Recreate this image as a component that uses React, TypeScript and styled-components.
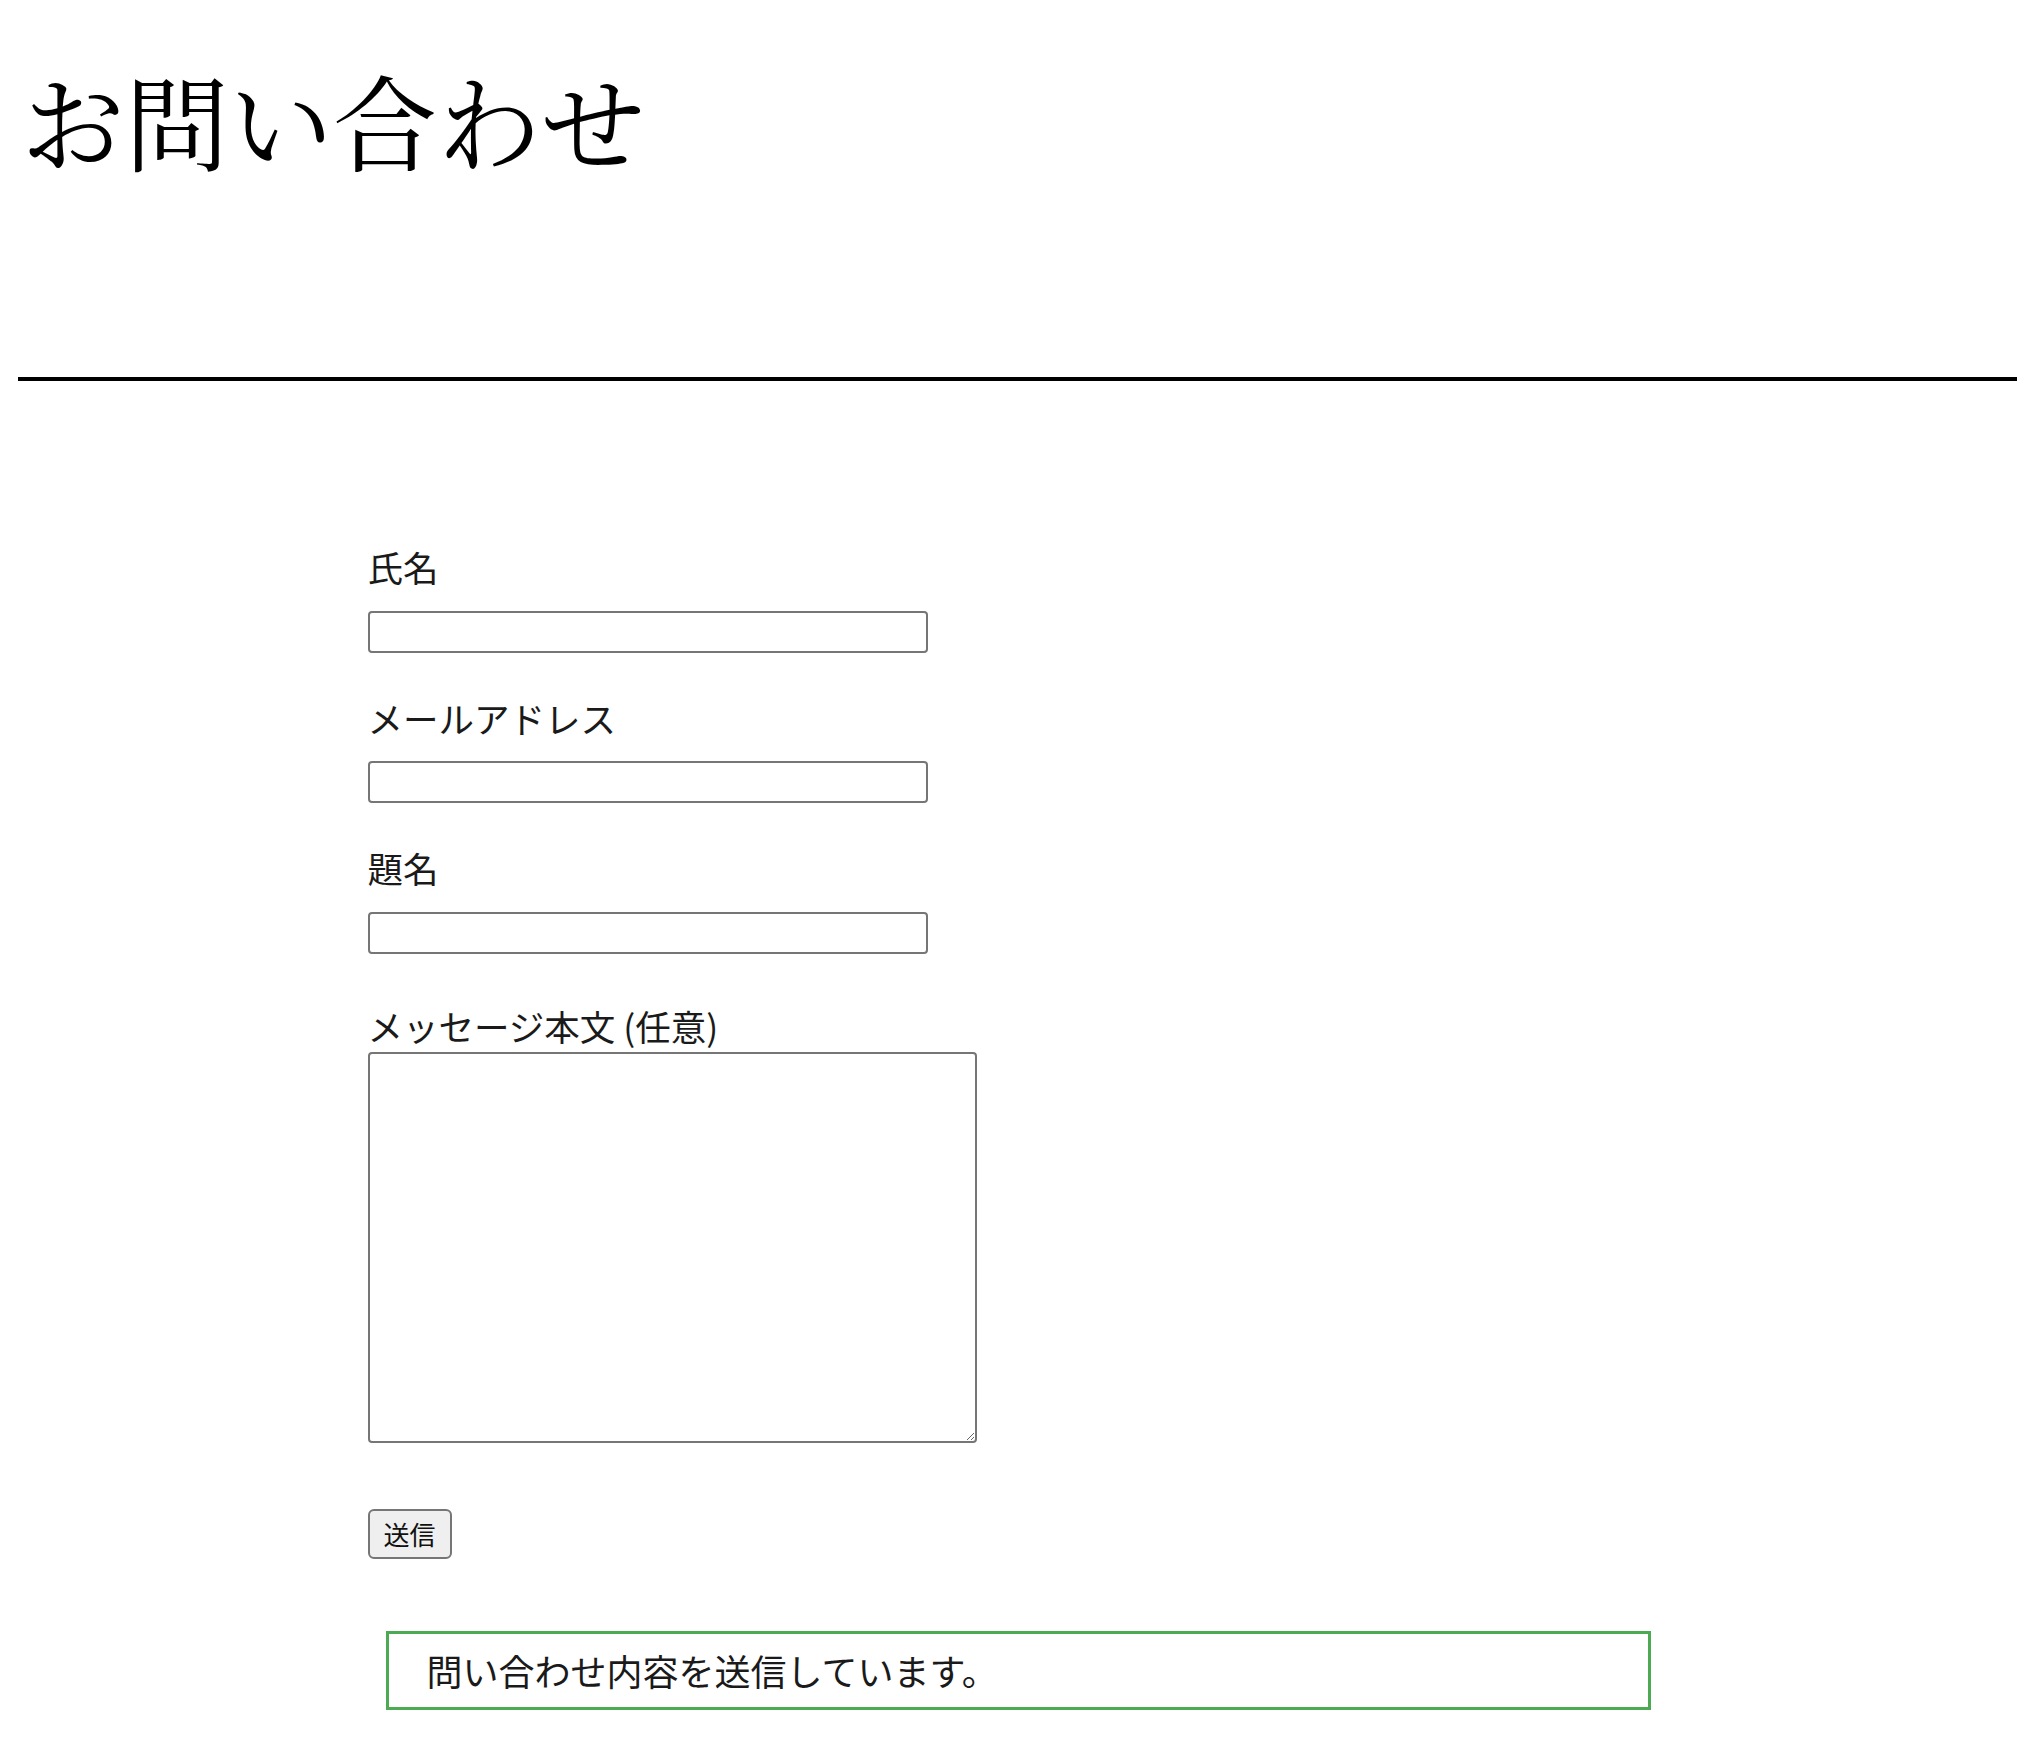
import styled, { createGlobalStyle } from 'styled-components';

const GlobalStyle = createGlobalStyle`
  body {
    margin: 0;
    background: #fff;
    color: #111;
    font-family: "Noto Sans CJK JP", "Noto Sans", sans-serif;
  }
`;

const Masthead = styled.header`
  padding: 67px 0 0 21px;
  height: 377px;
  box-sizing: border-box;
`;

const Title = styled.h1`
  margin: 0;
  font-family: "Noto Serif CJK JP", "Noto Sans CJK JP", serif;
  font-size: 104px;
  font-weight: 400;
  line-height: 1;
  color: #000;
`;

const Rule = styled.hr`
  margin: 0 18px;
  height: 4px;
  border: none;
  background: #000;
`;

const Content = styled.main`
  width: 1300px;
  margin: 0 auto;
  padding-top: 168px;
  padding-bottom: 30px;
`;

const Form = styled.form`
  display: flex;
  flex-direction: column;
  align-items: flex-start;
`;

const Field = styled.div<{ $gap?: number }>`
  display: flex;
  flex-direction: column;
  align-items: flex-start;
  margin-top: ${({ $gap }) => $gap ?? 0}px;
`;

const FieldLabel = styled.label<{ $space: number }>`
  display: block;
  font-size: 35.5px;
  line-height: 1;
  color: #1a1a1a;
  margin-bottom: ${({ $space }) => $space}px;
`;

const TextInput = styled.input`
  box-sizing: border-box;
  width: 560px;
  height: 42px;
  border: 2px solid #767676;
  border-radius: 4px;
  background: #fff;
  padding: 0 6px;
  font-size: 26px;
`;

const MessageArea = styled.textarea`
  box-sizing: border-box;
  width: 609px;
  height: 391px;
  border: 2px solid #767676;
  border-radius: 4px;
  background: #fff;
  font-size: 26px;
`;

const SubmitButton = styled.button`
  box-sizing: border-box;
  margin-top: 66px;
  width: 84px;
  height: 50px;
  padding: 0;
  border: 2px solid #767676;
  border-radius: 6px;
  background: #efefef;
  color: #111;
  font-family: "Noto Sans CJK JP", sans-serif;
  font-size: 26px;
  line-height: 1;
`;

const ResponseOutput = styled.div`
  align-self: stretch;
  box-sizing: border-box;
  margin: 72px 17px 0 18px;
  height: 79px;
  padding: 0 38px;
  border: 3px solid #4caa52;
  font-size: 36px;
  line-height: 73px;
  color: #1a1a1a;
`;

const fields = [
  { id: 'name', label: '氏名', gap: 0 },
  { id: 'email', label: 'メールアドレス', gap: 47 },
  { id: 'subject', label: '題名', gap: 47 },
];

export default function App() {
  return (
    <>
      <GlobalStyle />
      <Masthead>
        <Title>お問い合わせ</Title>
      </Masthead>
      <Rule />
      <Content>
        <Form onSubmit={(e) => e.preventDefault()}>
          {fields.map(({ id, label, gap }) => (
            <Field key={id} $gap={gap}>
              <FieldLabel htmlFor={id} $space={26}>{label}</FieldLabel>
              <TextInput id={id} type="text" />
            </Field>
          ))}
          <Field $gap={54}>
            <FieldLabel htmlFor="message" $space={9}>メッセージ本文 (任意)</FieldLabel>
            <MessageArea id="message" />
          </Field>
          <SubmitButton type="submit">送信</SubmitButton>
          <ResponseOutput>問い合わせ内容を送信しています。</ResponseOutput>
        </Form>
      </Content>
    </>
  );
}
